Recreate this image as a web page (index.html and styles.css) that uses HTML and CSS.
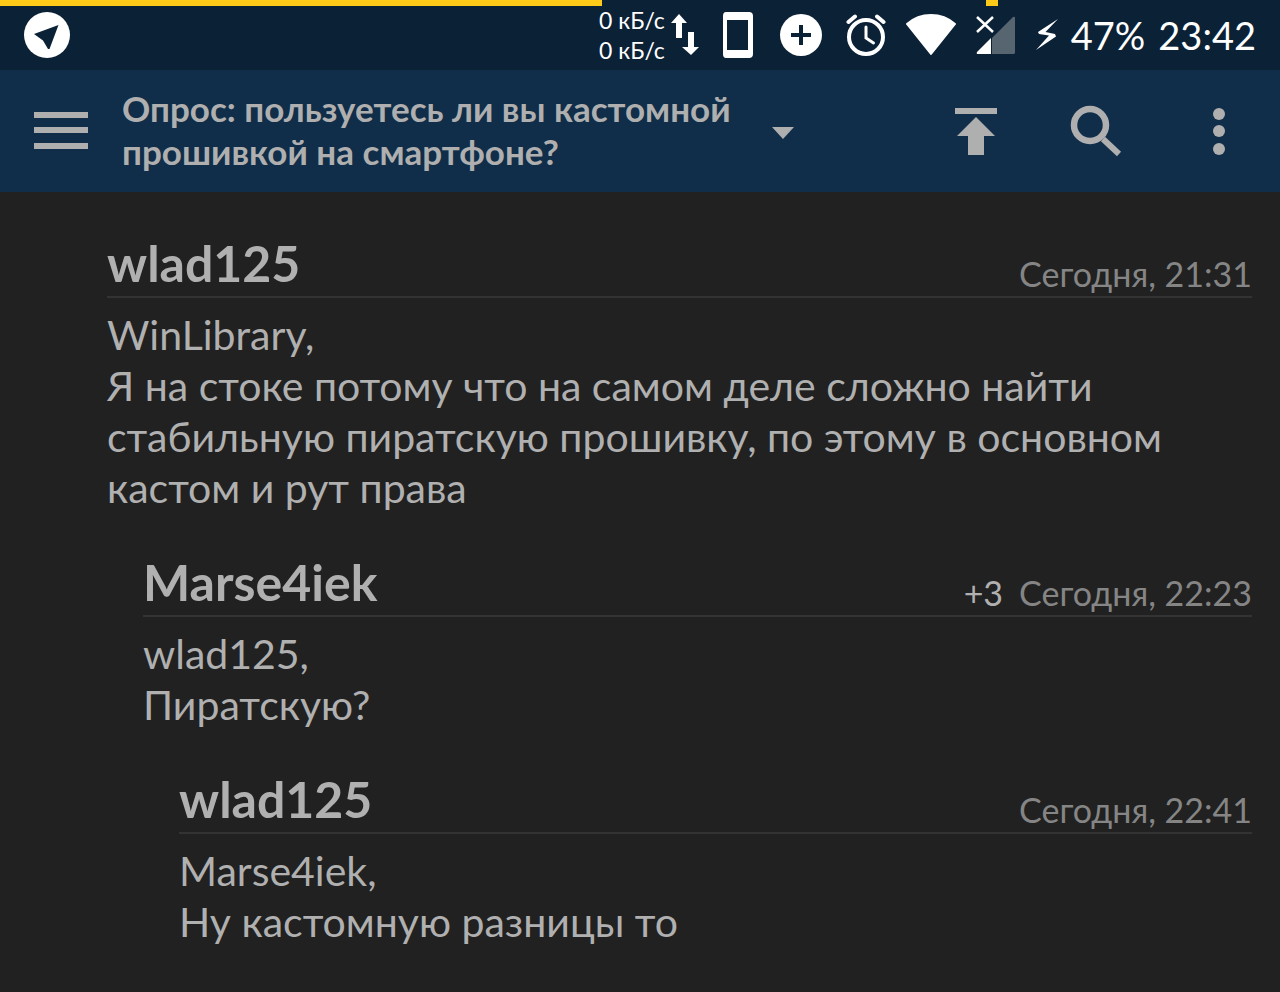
FILE: index.html
```html
<!DOCTYPE html>
<html lang="ru">
<head>
  <meta charset="UTF-8" />
  <meta name="viewport" content="width=device-width, initial-scale=1.0"/>
  <title>Опрос: пользуетесь ли вы кастомной прошивкой на смартфоне?</title>
  <link rel="stylesheet" href="styles.css">
</head>
<body>
  <div class="progress"><span class="progress-main"></span><span class="progress-mark"></span></div>

  <div class="status-bar">
    <svg class="status-logo" viewBox="0 0 46 46" width="46" height="46">
      <circle cx="23" cy="23" r="23" fill="#fff"/>
      <path d="M10 22 34.500 13 25.500 37H24L19 28.500Z" fill="#0b2136"/>
    </svg>
    <div class="status-icons">
      <div class="net">
        <div class="net-speed"><span>0 кБ/с</span><span>0 кБ/с</span></div>
        <svg viewBox="0 0 28 42" width="28" height="42" fill="#fff">
          <path d="M8 0 16 9H11V24H5V9H0Z"/>
          <path d="M17 18H23V33H28L20 41 11 33H17Z"/>
        </svg>
      </div>
      <svg viewBox="0 0 37 46" width="37" height="46">
        <path fill="#fff" fill-rule="evenodd" d="M7 0H30Q34 0 34 4V42Q34 46 30 46H7Q4 46 4 42V4Q4 0 7 0ZM8 8V38H29V8Z"/>
      </svg>
      <svg viewBox="0 0 50 42" width="50" height="42">
        <circle cx="25" cy="21" r="21" fill="#fff"/>
        <path d="M25 11V31M15 21H35" stroke="#0b2136" stroke-width="4"/>
      </svg>
      <svg viewBox="0 0 40 42" width="40" height="42" fill="none" stroke="#fff" stroke-linecap="round">
        <circle cx="20" cy="23" r="17" stroke-width="4"/>
        <path d="M2.500 8 9 2.500M31 2.500 37.500 8" stroke-width="4"/>
        <path d="M20 13V24L27.500 29" stroke-width="3"/>
      </svg>
      <svg viewBox="0 0 50 42" width="50" height="42">
        <path d="M1 10Q11 1 25 1T49 10L25 40Z" fill="#fff" stroke="#fff" stroke-width="2" stroke-linejoin="round"/>
      </svg>
      <svg viewBox="0 0 40 40" width="40" height="40">
        <path d="M39 3V38Q39 39 37 39H16V23L37 2Q39 1 39 3Z" fill="#576571"/>
        <path d="M1 37 15 23V39H2Q0 39 1 37Z" fill="#fff"/>
        <path d="M1 2 17 17M17 2 1 17" stroke="#fff" stroke-width="2.500"/>
      </svg>
      <div class="battery">
        <svg viewBox="0 0 22 32" width="22" height="32">
          <path d="M22 0 2 13 3 15 13 16.500 0 31 20 17.500 19 15 9.500 13Z" fill="#fff"/>
        </svg>
        <span class="charge">47%</span>
        <span class="clock">23:42</span>
      </div>
    </div>
  </div>

  <header class="toolbar">
    <button class="icon-btn menu" aria-label="Меню">
      <svg viewBox="0 0 56 40" width="56" height="40" fill="#afafb0">
        <path d="M1 1H55V7H1ZM1 16H55V22H1ZM1 32H55V38H1Z"/>
      </svg>
    </button>
    <button class="topic">
      <span class="topic-title">Опрос: пользуетесь ли вы кастомной прошивкой на смартфоне?</span>
      <svg viewBox="0 0 22 16" width="22" height="16"><path d="M0 4H22L11 16Z" fill="#afafb0"/></svg>
    </button>
    <div class="actions">
      <button class="icon-btn" aria-label="Наверх">
        <svg viewBox="0 0 42 48" width="42" height="48" fill="#afafb0">
          <path d="M0 1H42V7H0ZM21 10 40 29H29V48H13V29H2Z"/>
        </svg>
      </button>
      <button class="icon-btn" aria-label="Поиск">
        <svg viewBox="0 0 52 52" width="52" height="52" fill="none" stroke="#afafb0">
          <circle cx="20" cy="20" r="16" stroke-width="6.500"/>
          <path d="M33 34 49 49" stroke-width="6"/>
        </svg>
      </button>
      <button class="icon-btn" aria-label="Ещё">
        <svg viewBox="0 0 48 48" width="48" height="48" fill="#afafb0">
          <circle cx="24" cy="7" r="6"/><circle cx="24" cy="24" r="6"/><circle cx="24" cy="42" r="6"/>
        </svg>
      </button>
    </div>
  </header>

  <main class="comments">
    <article class="comment">
      <div class="comment-head">
        <h2>wlad125</h2>
        <div class="meta"><time>Сегодня, 21:31</time></div>
      </div>
      <p>WinLibrary,<br>Я на стоке потому что на самом деле сложно найти стабильную пиратскую прошивку, по этому в основном кастом и рут права</p>
    </article>
    <article class="comment level-1">
      <div class="comment-head">
        <h2>Marse4iek</h2>
        <div class="meta"><span class="score">+3</span><time>Сегодня, 22:23</time></div>
      </div>
      <p>wlad125,<br>Пиратскую?</p>
    </article>
    <article class="comment level-2">
      <div class="comment-head">
        <h2>wlad125</h2>
        <div class="meta"><time>Сегодня, 22:41</time></div>
      </div>
      <p>Marse4iek,<br>Ну кастомную разницы то</p>
    </article>
  </main>
</body>
</html>
```
FILE: styles.css
```css
* {
  box-sizing: border-box;
}

body {
  margin: 0;
  background: #212121;
  color: #b0b0b0;
  font-family: Lato, "Open Sans", sans-serif;
}

svg {
  display: block;
  flex: none;
}

button {
  padding: 0;
  border: none;
  background: none;
  color: inherit;
  font: inherit;
  cursor: pointer;
}

/* loading line over the status bar */
.progress {
  position: absolute;
  top: 0;
  left: 0;
  width: 100%;
  height: 6px;
  display: flex;
}

.progress-main {
  width: 47%;
  background: #ffca18;
}

.progress-mark {
  width: 12px;
  margin-left: 30%;
  background: #ffca18;
}

.status-bar {
  display: flex;
  justify-content: space-between;
  align-items: center;
  height: 70px;
  padding: 0 24px;
  background: #0b2136;
  color: #fff;
}

.status-icons {
  display: flex;
  align-items: center;
  gap: 20px;
}

.net,
.battery {
  display: flex;
  align-items: center;
}

.net {
  gap: 6px;
}

.net-speed {
  display: flex;
  flex-direction: column;
  font-size: 23px;
  line-height: 30px;
}

.battery {
  gap: 13px;
  font-size: 38px;
  line-height: 44px;
}

.toolbar {
  display: flex;
  align-items: center;
  height: 122px;
  padding: 0 37px 0 33px;
  background: #102e49;
  color: #afafb0;
}

.topic {
  display: flex;
  align-items: center;
  gap: 40px;
  margin-left: 33px;
  text-align: left;
}

.topic-title {
  width: 610px;
  padding-bottom: 2px;
  font-size: 35px;
  font-weight: bold;
  line-height: 43px;
}

.actions {
  display: flex;
  align-items: center;
  gap: 73px;
  margin-left: auto;
}

.comments {
  padding: 46px 28px 0 107px;
}

.comment {
  margin-bottom: 44px;
}

.level-1 {
  margin-left: 36px;
}

.level-2 {
  margin-left: 72px;
}

.comment-head {
  display: flex;
  justify-content: space-between;
  align-items: flex-end;
  height: 60px;
  border-bottom: 2px solid #333;
}

h2 {
  margin: 0;
  font-size: 50px;
  line-height: 66px;
}

.meta {
  display: flex;
  gap: 16px;
  font-size: 34px;
  line-height: 44px;
  color: #858585;
}

.score {
  color: #b0b0b0;
}

.comment p {
  margin: 11px 0 0;
  font-size: 41px;
  line-height: 51px;
}
```
